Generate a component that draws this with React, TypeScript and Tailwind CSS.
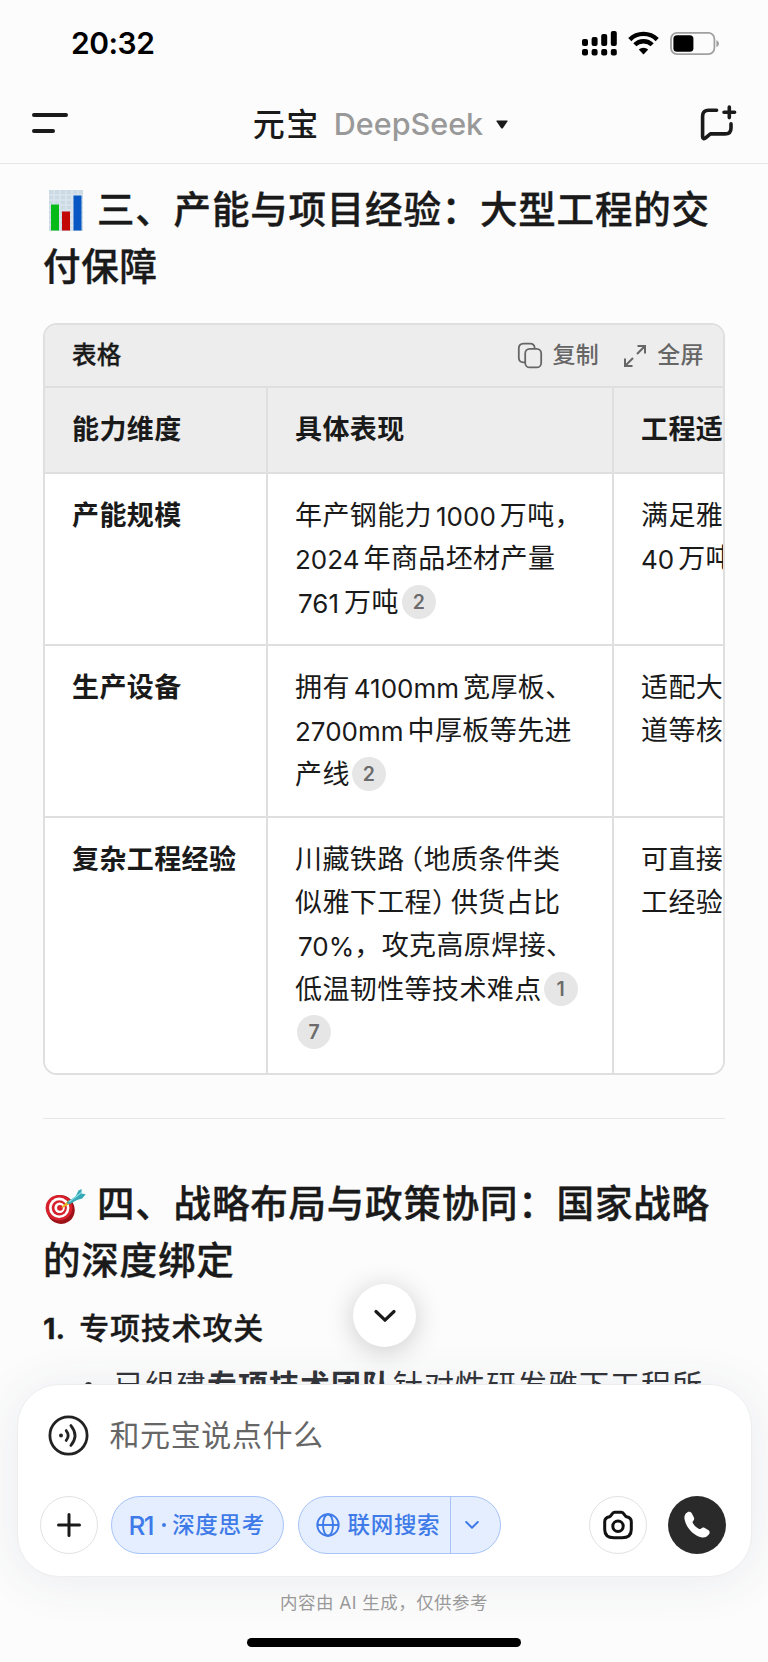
import type { ReactNode } from "react";

function Cite({ n, className = "ml-[2px]" }: { n: number; className?: string }) {
  return (
    <span
      className={`mb-[3px] inline-flex size-[34px] shrink-0 items-center justify-center rounded-full bg-[#e6e6e6] pt-[2px] text-[19.5px] font-semibold tracking-normal text-[#6b6b6b] ${className}`}
    >
      {n}
    </span>
  );
}

function Latin({ children, className = "mr-1" }: { children: ReactNode; className?: string }) {
  return <span className={`text-[26px] tracking-normal ${className}`}>{children}</span>;
}

function Line({ children, className = "h-[43px]" }: { children: ReactNode; className?: string }) {
  return <div className={`flex items-center whitespace-nowrap ${className}`}>{children}</div>;
}

function Row({
  title,
  detail,
  fit,
  className,
}: {
  title: string;
  detail: ReactNode;
  fit: ReactNode;
  className: string;
}) {
  return (
    <div className={`grid grid-cols-[223px_346px_240px] bg-white ${className}`}>
      <div className="border-r-2 border-[#dfdfdf] pl-[27px] pt-[21px] font-bold">
        <Line>{title}</Line>
      </div>
      <div className="border-r-2 border-[#dfdfdf] pl-[27px] pt-[21px]">{detail}</div>
      <div className="pl-[27px] pt-[21px]">{fit}</div>
    </div>
  );
}

function StatusIcons() {
  return (
    <svg width="138" height="26" viewBox="0 0 138 26">
      {[
        [0, 9, 7],
        [9.6, 7, 9],
        [19.2, 4, 12],
        [28.8, 1, 15],
      ].map(([x, y, h]) => (
        <g key={x}>
          <rect x={x} y={y} width="6" height={h} rx="2" />
          <rect x={x} y="19" width="6" height="6.6" rx="2" />
        </g>
      ))}
      <g fill="none" stroke="#000" strokeWidth="4.4">
        <path d="M47.8 9.6a19.3 19.3 0 0 1 27.4 0" />
        <path d="M52.8 14.8a12.3 12.3 0 0 1 17.4 0" />
      </g>
      <path d="M61.5 24.4l-4.7-4.8a6.8 6.8 0 0 1 9.4 0z" />
      <rect x="89" y="2.9" width="43.4" height="21.2" rx="6" fill="none" stroke="#a0a0a0" strokeWidth="1.8" />
      <rect x="91.4" y="5.2" width="20" height="16.6" rx="3.6" />
      <path d="M134.4 10.2c3.4 1.2 3.4 5.6 0 6.8z" fill="#a0a0a0" />
    </svg>
  );
}

function NewChatIcon() {
  return (
    <svg width="38" height="38" viewBox="0 0 38 38" fill="none" stroke="#1a1a1a" strokeWidth="3.6" strokeLinecap="round" strokeLinejoin="round">
      <path d="M17.6 6.3H9.6c-4 0-6 2-6 6v20.4c0 2 1.6 2.4 3 1.2l4.8-4H26c4 0 6-2 6-6v-4" />
      <path d="M30.3 3v10.6M25 8.3h10.6" />
    </svg>
  );
}

function ChartEmoji() {
  return (
    <svg width="34" height="41" viewBox="0 0 34 41">
      <rect width="34" height="41" fill="#ccdae4" />
      <path d="M0 5h34M0 10h34M0 15h34M0 20h34M0 25h34M0 30h34M0 35h34M5 0v41M11 0v41M17 0v41M23 0v41M29 0v41" stroke="#dae5ee" strokeWidth="1.6" />
      <rect x="2" y="14.5" width="8" height="26" fill="#06bb17" />
      <rect x="13" y="21.5" width="8" height="19" fill="#c30808" />
      <rect x="24.5" y="5.5" width="8" height="35" fill="#0657c4" />
    </svg>
  );
}

function DartEmoji() {
  return (
    <svg width="41" height="36" viewBox="0 0 41 36">
      <ellipse cx="15.6" cy="20.4" rx="14" ry="14.6" fill="#9d1219" transform="rotate(-30 15.6 20.4)" />
      <ellipse cx="14" cy="18.8" rx="13.4" ry="12.8" fill="#d6202b" />
      <circle cx="14.2" cy="18.8" r="10.2" fill="#fff" />
      <circle cx="14.3" cy="18.8" r="7.6" fill="#d6202b" />
      <circle cx="14.6" cy="18.8" r="5.2" fill="#fff" />
      <circle cx="15" cy="18.8" r="2.9" fill="#d6202b" />
      <path d="M16 18.5L24 11l2 3-7.5 4.5z" fill="#e9b11e" />
      <path d="M22 13l8.5-5.5 3-6 3.2-1.5-.4 4.5 4.4.8-3.5 4.2-5.2 1.4-7 4.1-2.8-.3z" fill="#35a9b5" />
      <path d="M24 13L36.5 3.5" stroke="#7fdbe2" strokeWidth="1.4" />
    </svg>
  );
}

export default function App() {
  return (
    <div className="relative flex h-[1662px] w-[768px] flex-col overflow-hidden bg-[#fcfcfc] font-['Inter','Noto_Sans_CJK_SC',sans-serif] text-[#1a1a1a]">
      <header className="h-[164px] shrink-0 border-b border-[#e6e6e6]">
        <div className="flex h-[86px] items-center justify-between pl-[71px] pr-[48px]">
          <span className="mt-px text-[30px] font-semibold tracking-[-0.5px] text-black">20:32</span>
          <StatusIcons />
        </div>
        <div className="flex h-[77px] items-center justify-between pl-[32px] pr-[31px]">
          <div className="mb-[3px] flex w-[42px] flex-col gap-[12px]">
            <div className="h-[4px] w-[36px] rounded-full bg-[#1a1a1a]" />
            <div className="h-[4px] w-[23px] rounded-full bg-[#1a1a1a]" />
          </div>
          <div className="flex items-center pr-[12px]">
            <span className="text-[32px] font-medium tracking-[1.5px]">元宝</span>
            <span className="mb-[2px] ml-[14px] text-[30.5px] font-medium text-[#999999]">DeepSeek</span>
            <svg className="ml-[13px]" width="12" height="9" viewBox="0 0 12 9">
              <path d="M1 .5h10q1 0 .4 1L7 8q-1 1-2 0L.6 1.5Q0 .5 1 .5z" fill="#1a1a1a" />
            </svg>
          </div>
          <div className="mb-[4px]">
            <NewChatIcon />
          </div>
        </div>
      </header>

      <main className="h-[1220px] shrink-0 overflow-hidden px-[43px] pt-[18px]">
        <h2 className="text-[37.5px] font-medium tracking-[0.8px] [-webkit-text-stroke:0.4px_#1a1a1a]">
          <Line className="h-[57px]">
            <span className="ml-[6px] mr-[14px]"><ChartEmoji /></span>
            三、产能与项目经验：大型工程的交
          </Line>
          <Line className="h-[57px]">付保障</Line>
        </h2>

        <section className="mt-[27px] h-[752px] w-[682px] overflow-hidden rounded-[14px] border-2 border-[#dfdfdf] bg-white text-[27px] tracking-[0.4px]">
          <div className="flex h-[61px] items-center bg-[#ededed] pl-[27px] pr-[19px]">
            <span className="text-[24.5px] font-medium tracking-[0.3px] [-webkit-text-stroke:0.3px_#1a1a1a]">表格</span>
            <div className="ml-auto flex items-center text-[23px] font-medium text-[#666666]">
              <svg width="26" height="27" viewBox="0 0 26 27" fill="none" stroke="#666" strokeWidth="1.8">
                <rect x="8.2" y="6.9" width="16" height="18.5" rx="4.5" />
                <path d="M8.2 20.3H6.5c-3.3 0-4.7-1.6-4.7-4.5V6.5c0-3 1.5-4.8 4.7-4.8H13c3 0 4.7 1.5 4.7 5" />
              </svg>
              <span className="ml-[9px]">复制</span>
              <svg className="ml-[24px]" width="24" height="24" viewBox="0 0 24 24" fill="none" stroke="#666" strokeWidth="2">
                <path d="M14.5 2H22v7.5M22 2l-8 8M9.5 22H2v-7.5M2 22l8-8" />
              </svg>
              <span className="ml-[10px]">全屏</span>
            </div>
          </div>
          <div className="grid h-[88px] grid-cols-[223px_346px_240px] border-y-2 border-[#dfdfdf] bg-[#ededed] font-bold">
            <div className="flex items-center border-r-2 border-[#dfdfdf] pl-[27px]">能力维度</div>
            <div className="flex items-center border-r-2 border-[#dfdfdf] pl-[27px]">具体表现</div>
            <div className="flex items-center whitespace-nowrap pl-[27px]">工程适配性</div>
          </div>
          <Row
            className="h-[172px] border-b-2 border-[#dfdfdf]"
            title="产能规模"
            detail={
              <>
                <Line>年产钢能力<Latin className="mx-1">1000</Latin>万吨，</Line>
                <Line><Latin>2024</Latin>年商品坯材产量</Line>
                <Line className="h-[45px]"><Latin className="ml-[3px] mr-[5px]">761</Latin>万吨<Cite n={2} className="ml-[3px]" /></Line>
              </>
            }
            fit={
              <>
                <Line>满足雅下工程</Line>
                <Line><Latin>40</Latin>万吨需求</Line>
              </>
            }
          />
          <Row
            className="h-[172px] border-b-2 border-[#dfdfdf]"
            title="生产设备"
            detail={
              <>
                <Line>拥有<Latin className="mx-1">4100mm</Latin>宽厚板、</Line>
                <Line><Latin>2700mm</Latin>中厚板等先进</Line>
                <Line className="h-[45px]">产线<Cite n={2} /></Line>
              </>
            }
            fit={
              <>
                <Line>适配大型压力管</Line>
                <Line>道等核心部件</Line>
              </>
            }
          />
          <Row
            className="h-[256px]"
            title="复杂工程经验"
            detail={
              <>
                <Line>川藏铁路<span className="ml-[5px] [font-feature-settings:'halt']">（</span>地质条件类</Line>
                <Line>似雅下工程<span className="mr-[5px] [font-feature-settings:'halt']">）</span>供货占比</Line>
                <Line><Latin className="ml-[3px]">70%</Latin>，攻克高原焊接、</Line>
                <Line className="h-[44px]">低温韧性等技术难点<Cite n={1} /></Line>
                <Line><Cite n={7} /></Line>
              </>
            }
            fit={
              <>
                <Line>可直接复用施</Line>
                <Line>工经验</Line>
              </>
            }
          />
        </section>

        <hr className="mt-[43px] border-[#e6e6e6]" />

        <h2 className="mt-[57px] text-[37.5px] font-medium tracking-[0.8px] [-webkit-text-stroke:0.4px_#1a1a1a]">
          <Line className="h-[57px]">
            <span className="ml-[2px] mr-[11px] mt-[4px]"><DartEmoji /></span>
            四、战略布局与政策协同：国家战略
          </Line>
          <Line className="h-[57px]">的深度绑定</Line>
        </h2>
        <div className="mt-[10px] text-[30px] tracking-[0.8px]">
          <Line className="h-[57px] font-medium [-webkit-text-stroke:0.3px_#1a1a1a]">
            <span className="mr-[14px] text-[29px] font-bold tracking-normal">1.</span>专项技术攻关
          </Line>
          <Line className="h-[57px] pl-[42px] tracking-[1px] text-[#333438]">
            <span className="mr-[22px] size-[7px] rounded-full bg-[#333438]" />
            已组建<b>专项技术团队</b>针对性研发雅下工程所
          </Line>
        </div>
      </main>

      <footer className="relative flex grow flex-col items-center">
        <div className="flex h-[193px] w-[735px] shrink-0 flex-col rounded-[42px] border border-[#eeeeee] bg-white pl-[22px] pr-[25px] shadow-[0_4px_50px_rgba(50,70,110,0.09)]">
          <div className="mt-[19px] flex h-[62px] items-center pl-[8px]">
            <svg width="41" height="41" viewBox="0 0 41 41" fill="none" stroke="#222" strokeWidth="2.8" strokeLinecap="round">
              <circle cx="20.5" cy="20.5" r="18.6" />
              <circle cx="13" cy="20.5" r="2" fill="#222" stroke="none" />
              <path d="M18.2 15.6q3.8 4.9 0 9.8M22.9 10.6q8.2 9.900 0 19.800" />
            </svg>
            <span className="ml-[21px] text-[30px] tracking-[0.6px] text-[#666666]">和元宝说点什么</span>
          </div>
          <div className="mt-[30px] flex h-[58px] items-center">
            <div className="flex size-[58px] items-center justify-center rounded-full border border-[#e2e2e2]">
              <svg width="24" height="24" viewBox="0 0 24 24" stroke="#1a1a1a" strokeWidth="3" strokeLinecap="round">
                <path d="M12 1.5v21M1.5 12h21" />
              </svg>
            </div>
            <div className="ml-[13px] flex h-[58px] w-[173px] items-center rounded-full border border-[#a7c3f8] bg-[#e5eefe] pl-[17px] text-[22.5px] font-medium tracking-[0.7px] text-[#3f7be8]">
              <span className="text-[26px] tracking-[-1.5px]">R1</span>
              <span className="ml-[9px] mr-[6px] size-[4px] rounded-full bg-[#3f7be8]" />
              深度思考
            </div>
            <div className="ml-[14px] flex h-[58px] w-[203px] items-center overflow-hidden rounded-full border border-[#a7c3f8] bg-[#e5eefe] pl-[17px] text-[22.5px] font-medium tracking-[0.7px] text-[#3f7be8]">
              <svg width="24" height="24" viewBox="0 0 24 24" fill="none" stroke="#3f7be8" strokeWidth="1.9">
                <circle cx="12" cy="12" r="10.7" />
                <ellipse cx="12" cy="12" rx="5" ry="10.7" />
                <path d="M1.3 12h21.4" />
              </svg>
              <span className="ml-[8px] w-[102px]">联网搜索</span>
              <span className="flex h-full grow items-center border-l border-[#a7c3f8] pl-[14px]">
                <svg width="14" height="10" viewBox="0 0 14 10" fill="none" stroke="#3f7be8" strokeWidth="2" strokeLinecap="round" strokeLinejoin="round">
                  <path d="M1.2 2L7 7.8 12.8 2" />
                </svg>
              </span>
            </div>
            <div className="ml-auto flex size-[58px] items-center justify-center rounded-full border border-[#e2e2e2]">
              <svg width="30" height="30" viewBox="0 0 30 30" fill="none" stroke="#111" strokeWidth="3" strokeLinejoin="round">
                <path d="M11.5 2.2h7c2.4 0 3 3.8 5 4.6 3 .6 4.8 2 4.8 5v7.7c0 6-3 8.3-9.3 8.3h-8c-6.3 0-9.3-2.3-9.3-8.3v-7.7c0-3 1.8-4.4 4.8-5 2-.8 2.6-4.6 5-4.6z" />
                <circle cx="15" cy="16.3" r="5.2" />
              </svg>
            </div>
            <div className="ml-[21px] flex size-[58px] items-center justify-center rounded-full bg-[#2a2a2a]">
              <svg width="28" height="28" viewBox="0 0 28 28" fill="#fff">
                <path d="M4.5 1.2c1.8-.9 3.6-.2 4.4 1.3l2 4c.7 1.5.2 2.5-.8 3.6-.7.9-.6 1.6 0 2.5 1.5 2.3 3.3 4 5.6 5.2 1 .5 1.6.4 2.4-.3 1.2-1.1 2.3-1.3 3.7-.5l3.4 2.1c1.6 1 1.9 2.7.8 4.2-1.8 2.6-4.7 4-8 3C9.8 24 3.4 16.6 1.7 9 .9 5.5 1.6 2.7 4.5 1.2z" />
              </svg>
            </div>
          </div>
        </div>
        <p className="mt-[12px] h-[28px] text-[17.5px] leading-[28px] tracking-[0.45px] text-[#999999]">内容由 AI 生成，仅供参考</p>
        <div className="mt-[21px] h-[9px] w-[274px] rounded-full bg-black" />
      </footer>

      <button className="absolute left-[353px] top-[1284px] flex size-[63px] items-center justify-center rounded-full bg-white shadow-[0_4px_28px_rgba(0,0,0,0.2)]">
        <svg width="22" height="14" viewBox="0 0 22 14" fill="none" stroke="#1a1a1a" strokeWidth="3.2" strokeLinecap="round" strokeLinejoin="round">
          <path d="M2 2.5l9 8.7 9-8.7" />
        </svg>
      </button>
    </div>
  );
}
